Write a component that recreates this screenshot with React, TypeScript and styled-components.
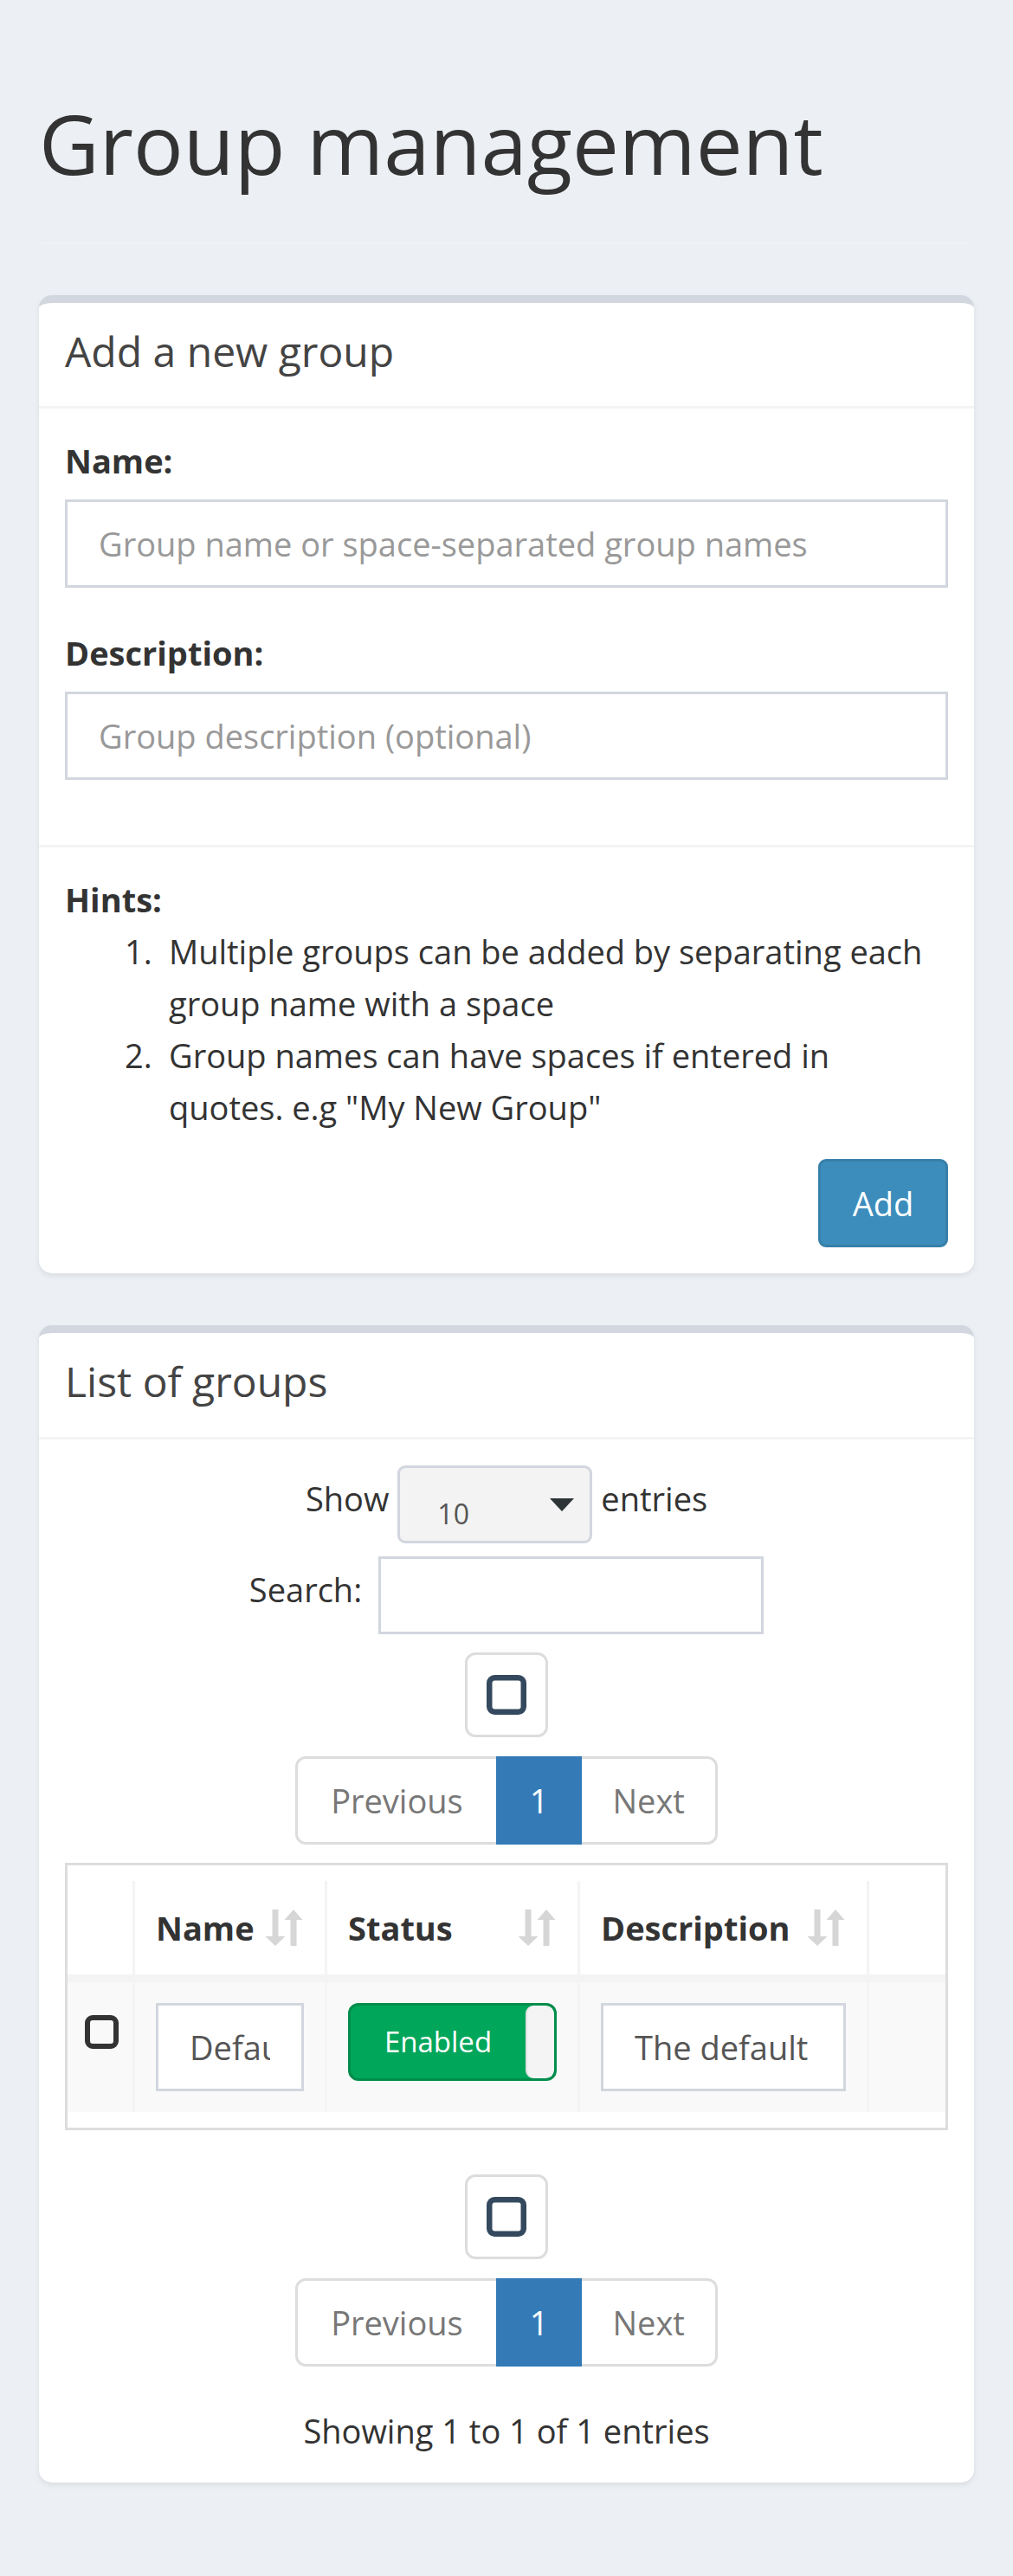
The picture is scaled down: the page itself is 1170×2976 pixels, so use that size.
import React from 'react';
import styled, { createGlobalStyle } from 'styled-components';

const GlobalStyle = createGlobalStyle`
  *, *::before, *::after { box-sizing: border-box; }
  html, body { margin: 0; padding: 0; }
  body {
    background: #ecf0f5;
    font-family: "Open Sans", "Noto Sans", sans-serif;
    font-size: 38px;
    line-height: 60px;
    color: #333;
  }
`;

const Page = styled.div`
  padding: 111px 45px 106px;
`;

const Title = styled.h1`
  margin: 0;
  font-size: 96px;
  line-height: 107px;
  font-weight: 400;
  color: #333;
`;

const TitleRule = styled.div`
  height: 2px;
  margin: 62px 6px 0 3px;
  background: #eff2f6;
`;

const Stack = styled.div`
  margin-top: 59px;
  display: flex;
  flex-direction: column;
  gap: 60px;
`;

const Box = styled.section`
  background: #fff;
  border-top: 9px solid #d2d6de;
  border-radius: 15px;
  box-shadow: 0 3px 6px rgba(0, 0, 0, 0.08);
`;

const BoxHeader = styled.div`
  padding: 26px 30px 34px;
  border-bottom: 3px solid #f4f4f4;
`;

const BoxTitle = styled.h3`
  margin: 0;
  font-size: 48px;
  line-height: 59.4px;
  font-weight: 400;
  color: #444;
`;

const BoxBody = styled.div`
  padding: 30px;
`;

const BoxFooter = styled.div`
  padding: 30px;
  border-top: 3px solid #f4f4f4;
`;

const FormGroup = styled.div`
  margin-bottom: 45px;
`;

const Label = styled.label`
  display: block;
  font-weight: 700;
  margin-bottom: 15px;
`;

const TextInput = styled.input<{ $width?: number; $height?: number }>`
  display: block;
  width: ${(p) => (p.$width ? `${p.$width}px` : '100%')};
  height: ${(p) => p.$height ?? 102}px;
  padding: 0 36px;
  border: 3px solid #d2d6de;
  border-radius: 0;
  background: #fff;
  font-family: inherit;
  font-size: 38px;
  color: #555;
  outline: none;
  &::placeholder {
    color: #999;
  }
`;

const HintsTitle = styled.strong`
  display: block;
  font-weight: 700;
`;

const HintList = styled.ol`
  margin: 0 0 30px;
  padding-left: 120px;
  list-style: none;
  counter-reset: hint;
`;

const HintItem = styled.li`
  counter-increment: hint;
  &::before {
    content: counter(hint) ".";
    display: inline-block;
    width: 51px;
    margin-left: -51px;
  }
`;

const ButtonRow = styled.div`
  display: flex;
  justify-content: flex-end;
`;

const PrimaryButton = styled.button`
  width: 150px;
  height: 102px;
  padding: 0;
  background: #3c8dbc;
  border: 3px solid #367fa9;
  border-radius: 9px;
  color: #fff;
  font-family: inherit;
  font-size: 38px;
  line-height: 60px;
`;

const ControlRow = styled.div<{ $gap: number; $mb: number }>`
  display: flex;
  justify-content: center;
  align-items: center;
  gap: ${(p) => p.$gap}px;
  height: 90px;
  margin-bottom: ${(p) => p.$mb}px;
`;

const InlineLabel = styled.span`
  margin-bottom: 14px;
  white-space: nowrap;
`;

const FakeSelect = styled.div`
  display: flex;
  align-items: flex-start;
  width: 225px;
  height: 90px;
  padding: 0 18px 0 43px;
  background: #f3f3f3;
  border: 3px solid #d2d6de;
  border-radius: 9px;
`;

const SelectValue = styled.span`
  margin-top: 37px;
  font-size: 32px;
  line-height: 32px;
  color: #555;
`;

const Caret = styled.span`
  margin-left: auto;
  margin-top: 35px;
  width: 0;
  height: 0;
  border-left: 14.5px solid transparent;
  border-right: 14.5px solid transparent;
  border-top: 15px solid #2d3436;
`;

const SearchInput = styled(TextInput)`
  padding: 0 15px;
`;

const IconButton = styled.button<{ $mb: number }>`
  display: flex;
  align-items: center;
  justify-content: center;
  width: 96px;
  height: 98px;
  margin: 0 auto ${(p) => p.$mb}px;
  padding: 0;
  background: #fff;
  border: 3px solid #ddd;
  border-radius: 12px;
`;

const PagerList = styled.ul<{ $mb: number }>`
  display: flex;
  justify-content: center;
  margin: 0 0 ${(p) => p.$mb}px;
  padding: 0;
  list-style: none;
`;

const PagerItem = styled.li`
  & + & {
    margin-left: -3px;
  }
`;

const PageLink = styled.span<{ $active?: boolean; $edge?: 'first' | 'last' }>`
  position: relative;
  display: block;
  padding: 18px ${(p) => (p.$edge === 'first' ? 38 : p.$edge === 'last' ? 35 : 36)}px;
  line-height: 60px;
  border: 3px solid ${(p) => (p.$active ? '#337ab7' : '#ddd')};
  background: ${(p) => (p.$active ? '#337ab7' : '#fff')};
  color: ${(p) => (p.$active ? '#fff' : '#777')};
  z-index: ${(p) => (p.$active ? 2 : 1)};
  border-radius: ${(p) =>
    p.$edge === 'first' ? '12px 0 0 12px' : p.$edge === 'last' ? '0 12px 12px 0' : '0'};
`;

const TableWrap = styled.div`
  border: 3px solid #ddd;
  margin-bottom: 51px;
`;

const DataGrid = styled.div`
  display: grid;
  grid-template-columns: 75px 222px 292px 334px 91px;
  margin: 18px 0;
`;

const HeadCell = styled.div`
  position: relative;
  height: 117px;
  padding: 24px;
  border-left: 3px solid #f4f4f4;
  border-bottom: 9px solid #f4f4f4;
  font-weight: 700;
  white-space: nowrap;
  &:first-child {
    border-left: 0;
  }
`;

const SortMark = styled.svg`
  position: absolute;
  right: 25px;
  top: 33px;
`;

const BodyCell = styled.div<{ $check?: boolean }>`
  height: 150px;
  padding: ${(p) => (p.$check ? '32px 0 0 20px' : '24px')};
  border-left: ${(p) => (p.$check ? '0' : '3px solid #f4f4f4')};
  background: #f9f9f9;
`;

const Toggle = styled.div`
  display: flex;
  width: 241px;
  height: 90px;
  background: #00a65a;
  border: 3px solid #008d4c;
  border-radius: 12px;
  overflow: hidden;
`;

const ToggleLabel = styled.span`
  flex: 1;
  display: flex;
  align-items: center;
  justify-content: center;
  color: #fff;
  font-size: 33px;
`;

const ToggleHandle = styled.span`
  width: 33px;
  background: #f4f4f4;
  border-left: 2px solid #e2e2e2;
  border-radius: 9px;
`;

const InfoText = styled.div`
  text-align: center;
`;

const SortIcon = () => (
  <SortMark width="44" height="42" viewBox="0 0 44 42" aria-hidden>
    <path d="M8.5 0H15.5V31H23.5L12 42L0.5 31H8.5Z" fill="#d6d6d6" />
    <path d="M33 0L43.5 12H36.5V42H29.5V12H22.5Z" fill="#d6d6d6" />
  </SortMark>
);

const SquareIcon = ({ size, color, stroke }: { size: number; color: string; stroke: number }) => (
  <svg width={size} height={size} viewBox={`0 0 ${size} ${size}`} aria-hidden>
    <rect
      x={stroke / 2}
      y={stroke / 2}
      width={size - stroke}
      height={size - stroke}
      rx={6}
      fill="none"
      stroke={color}
      strokeWidth={stroke}
    />
  </svg>
);

const Pager = ({ mb }: { mb: number }) => (
  <PagerList $mb={mb}>
    <PagerItem>
      <PageLink $edge="first">Previous</PageLink>
    </PagerItem>
    <PagerItem>
      <PageLink $active>1</PageLink>
    </PagerItem>
    <PagerItem>
      <PageLink $edge="last">Next</PageLink>
    </PagerItem>
  </PagerList>
);

export default function App() {
  return (
    <>
      <GlobalStyle />
      <Page>
        <Title>Group management</Title>
        <TitleRule />
        <Stack>
          <Box>
            <BoxHeader>
              <BoxTitle>Add a new group</BoxTitle>
            </BoxHeader>
            <BoxBody>
              <FormGroup>
                <Label htmlFor="new_name">Name:</Label>
                <TextInput id="new_name" placeholder="Group name or space-separated group names" />
              </FormGroup>
              <FormGroup>
                <Label htmlFor="new_desc">Description:</Label>
                <TextInput id="new_desc" placeholder="Group description (optional)" />
              </FormGroup>
            </BoxBody>
            <BoxFooter>
              <HintsTitle>Hints:</HintsTitle>
              <HintList>
                <HintItem>Multiple groups can be added by separating each group name with a space</HintItem>
                <HintItem>Group names can have spaces if entered in quotes. e.g "My New Group"</HintItem>
              </HintList>
              <ButtonRow>
                <PrimaryButton type="button">Add</PrimaryButton>
              </ButtonRow>
            </BoxFooter>
          </Box>

          <Box>
            <BoxHeader>
              <BoxTitle>List of groups</BoxTitle>
            </BoxHeader>
            <BoxBody>
              <ControlRow $gap={10} $mb={15}>
                <InlineLabel>Show</InlineLabel>
                <FakeSelect>
                  <SelectValue>10</SelectValue>
                  <Caret />
                </FakeSelect>
                <InlineLabel>entries</InlineLabel>
              </ControlRow>
              <ControlRow $gap={19} $mb={21}>
                <InlineLabel>Search:</InlineLabel>
                <SearchInput $width={445} $height={90} />
              </ControlRow>
              <IconButton type="button" $mb={22}>
                <SquareIcon size={46} color="#34495e" stroke={6.5} />
              </IconButton>
              <Pager mb={21} />
              <TableWrap>
                <DataGrid>
                  <HeadCell />
                  <HeadCell>
                    Name
                    <SortIcon />
                  </HeadCell>
                  <HeadCell>
                    Status
                    <SortIcon />
                  </HeadCell>
                  <HeadCell>
                    Description
                    <SortIcon />
                  </HeadCell>
                  <HeadCell />
                  <BodyCell $check>
                    <SquareIcon size={39} color="#333" stroke={6} />
                  </BodyCell>
                  <BodyCell>
                    <TextInput $width={171} defaultValue="Default" />
                  </BodyCell>
                  <BodyCell>
                    <Toggle>
                      <ToggleLabel>Enabled</ToggleLabel>
                      <ToggleHandle />
                    </Toggle>
                  </BodyCell>
                  <BodyCell>
                    <TextInput $width={283} defaultValue="The default group" />
                  </BodyCell>
                  <BodyCell />
                </DataGrid>
              </TableWrap>
              <IconButton type="button" $mb={22}>
                <SquareIcon size={46} color="#34495e" stroke={6.5} />
              </IconButton>
              <Pager mb={44} />
              <InfoText>Showing 1 to 1 of 1 entries</InfoText>
            </BoxBody>
          </Box>
        </Stack>
      </Page>
    </>
  );
}
